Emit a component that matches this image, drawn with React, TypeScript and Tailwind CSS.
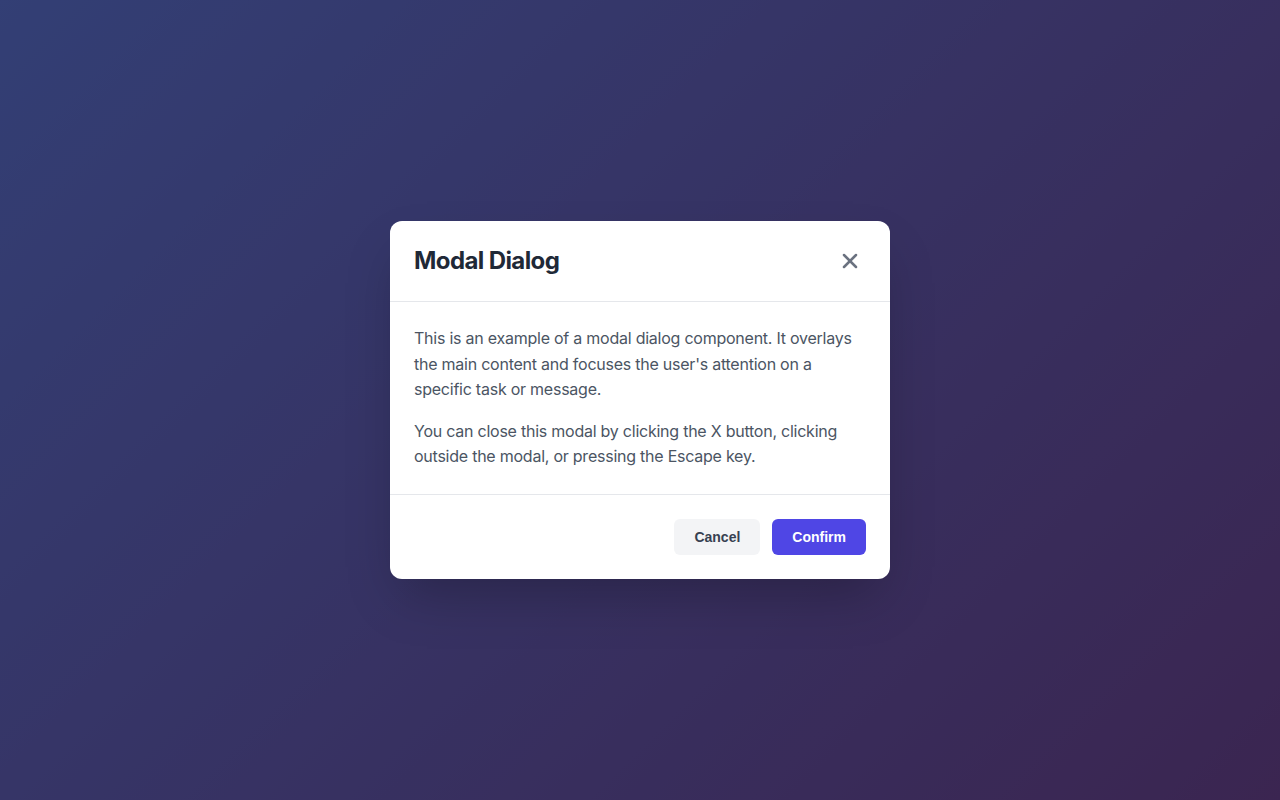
import { X } from 'lucide-react';

export default function App() {
  return (
    <div className="relative w-full min-h-screen h-[800px] bg-[linear-gradient(135deg,#667eea_0%,#764ba2_100%)] font-['Inter','Noto_Sans',sans-serif]">
      {/* Backdrop */}
      <div className="absolute inset-0 bg-black/50 flex items-center justify-center">
        <div className="w-[500px] bg-white rounded-xl shadow-2xl overflow-hidden">
          <div className="flex items-center justify-between px-6 py-6 border-b border-[#e5e7eb]">
            <h2 className="text-2xl font-bold text-[#1f2937] leading-8 tracking-tight">Modal Dialog</h2>
            <button className="p-1 -my-1 text-[#6b7280] rounded-md">
              <X size={24} strokeWidth={2.5} />
            </button>
          </div>

          <div className="p-6 text-[#4b5563] leading-[1.6] tracking-[-0.015em]">
            <p className="mb-4">
              This is an example of a modal dialog component. It overlays the main content and focuses the user's attention on a specific task or message.
            </p>
            <p>
              You can close this modal by clicking the X button, clicking outside the modal, or pressing the Escape key.
            </p>
          </div>

          <div className="flex justify-end gap-3 p-6 border-t border-[#e5e7eb]">
            <button className="px-5 py-2 text-sm font-bold leading-5 rounded-md bg-[#f3f4f6] text-[#374151] font-['Liberation_Sans',Arial,sans-serif]">
              Cancel
            </button>
            <button className="px-5 py-2 text-sm font-bold leading-5 rounded-md bg-[#4f46e5] text-white font-['Liberation_Sans',Arial,sans-serif]">
              Confirm
            </button>
          </div>
        </div>
      </div>
    </div>
  );
}
